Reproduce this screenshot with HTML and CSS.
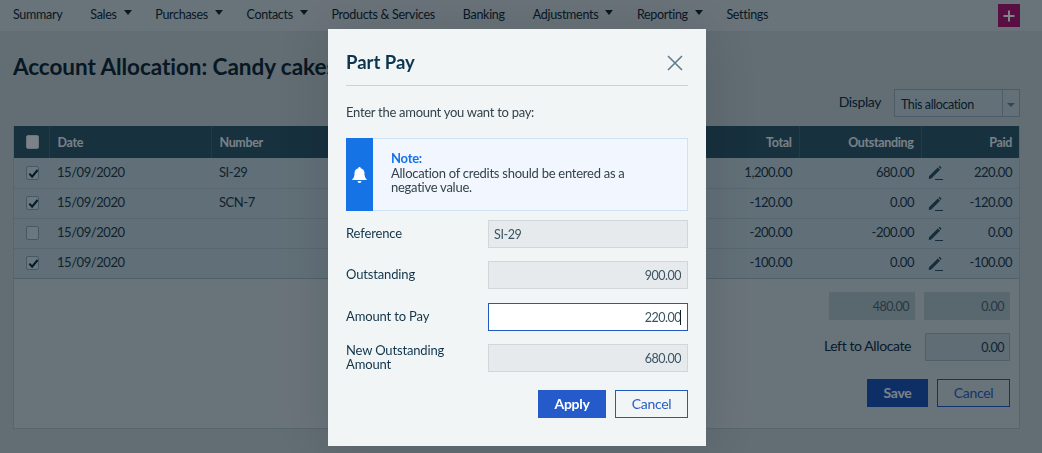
FILE: index.html
```html
<!DOCTYPE html>
<html lang="en">
<head>
    <meta charset="UTF-8">
    <meta name="viewport" content="width=device-width, initial-scale=1.0">
    <title>Account Allocation</title>
    <link rel="stylesheet" href="styles.css">
</head>
<body>
    <nav class="nav">
        <a class="nav-item">Summary</a>
        <a class="nav-item has-menu">Sales</a>
        <a class="nav-item has-menu">Purchases</a>
        <a class="nav-item has-menu">Contacts</a>
        <a class="nav-item">Products &amp; Services</a>
        <a class="nav-item">Banking</a>
        <a class="nav-item has-menu">Adjustments</a>
        <a class="nav-item has-menu">Reporting</a>
        <a class="nav-item">Settings</a>
        <span class="nav-add">
            <svg width="12" height="12" viewBox="0 0 12 12"><path d="M6 0.5v11M0.5 6h11" stroke="#fff" stroke-width="2"/></svg>
        </span>
    </nav>

    <main class="page">
        <h1 class="page-title">Account Allocation: Candy cakes</h1>
        <div class="display-row">
            <span class="display-label">Display</span>
            <div class="select">
                <span class="select-value">This allocation</span>
                <span class="select-arrow"></span>
            </div>
        </div>

        <div class="panel">
            <table class="grid">
                <colgroup>
                    <col class="col-check">
                    <col class="col-date">
                    <col class="col-number">
                    <col>
                    <col class="col-total">
                    <col class="col-outstanding">
                    <col class="col-paid">
                </colgroup>
                <thead>
                    <tr>
                        <th class="cell-check"><span class="check check-head"></span></th>
                        <th>Date</th>
                        <th>Number</th>
                        <th></th>
                        <th class="num">Total</th>
                        <th class="num">Outstanding</th>
                        <th class="num">Paid</th>
                    </tr>
                </thead>
                <tbody>
                    <tr>
                        <td class="cell-check"><span class="check"><svg viewBox="0 0 12 12"><path d="M1.5 6.2l3 3.2 6-7.2" fill="none" stroke="#00283c" stroke-width="2.2"/></svg></span></td>
                        <td>15/09/2020</td>
                        <td>SI-29</td>
                        <td></td>
                        <td class="num">1,200.00</td>
                        <td class="num">680.00</td>
                        <td class="num paid"><svg class="pencil" viewBox="0 0 15 15"><path d="M1 11.300L9.800 2.500l2.300 2.300L3.300 13.600 .8 14zM10.600 1.700l1-.9 2 2-.9 1.100z" fill="#2a4c60"/><path d="M7 14.500h8" stroke="#2a4c60"/></svg>220.00</td>
                    </tr>
                    <tr>
                        <td class="cell-check"><span class="check"><svg viewBox="0 0 12 12"><path d="M1.5 6.2l3 3.2 6-7.2" fill="none" stroke="#00283c" stroke-width="2.2"/></svg></span></td>
                        <td>15/09/2020</td>
                        <td>SCN-7</td>
                        <td></td>
                        <td class="num">-120.00</td>
                        <td class="num">0.00</td>
                        <td class="num paid"><svg class="pencil" viewBox="0 0 15 15"><path d="M1 11.300L9.800 2.500l2.300 2.300L3.300 13.600 .8 14zM10.600 1.700l1-.9 2 2-.9 1.100z" fill="#2a4c60"/><path d="M7 14.500h8" stroke="#2a4c60"/></svg>-120.00</td>
                    </tr>
                    <tr>
                        <td class="cell-check"><span class="check"></span></td>
                        <td>15/09/2020</td>
                        <td></td>
                        <td></td>
                        <td class="num">-200.00</td>
                        <td class="num">-200.00</td>
                        <td class="num paid"><svg class="pencil" viewBox="0 0 15 15"><path d="M1 11.300L9.800 2.500l2.300 2.300L3.300 13.600 .8 14zM10.600 1.700l1-.9 2 2-.9 1.100z" fill="#2a4c60"/><path d="M7 14.500h8" stroke="#2a4c60"/></svg>0.00</td>
                    </tr>
                    <tr>
                        <td class="cell-check"><span class="check"><svg viewBox="0 0 12 12"><path d="M1.5 6.2l3 3.2 6-7.2" fill="none" stroke="#00283c" stroke-width="2.2"/></svg></span></td>
                        <td>15/09/2020</td>
                        <td></td>
                        <td></td>
                        <td class="num">-100.00</td>
                        <td class="num">0.00</td>
                        <td class="num paid"><svg class="pencil" viewBox="0 0 15 15"><path d="M1 11.300L9.800 2.500l2.300 2.300L3.300 13.600 .8 14zM10.600 1.700l1-.9 2 2-.9 1.100z" fill="#2a4c60"/><path d="M7 14.500h8" stroke="#2a4c60"/></svg>-100.00</td>
                    </tr>
                </tbody>
            </table>

            <div class="summary">
                <div class="summary-row">
                    <span class="total-box">480.00</span>
                    <span class="total-box">0.00</span>
                </div>
                <div class="summary-row">
                    <span class="summary-label">Left to Allocate</span>
                    <span class="total-box total-box-line">0.00</span>
                </div>
                <div class="actions">
                    <button class="btn btn-primary">Save</button>
                    <button class="btn btn-secondary">Cancel</button>
                </div>
            </div>
        </div>
    </main>

    <!-- dim layer behind the dialog -->
    <div class="mask"></div>

    <section class="dialog">
        <header class="dialog-head">
            <h2 class="dialog-title">Part Pay</h2>
            <svg class="dialog-close" width="16" height="16" viewBox="0 0 16 16"><path d="M1 1l14 14M15 1L1 15" stroke="#5f7d8b" stroke-width="1.6" fill="none"/></svg>
        </header>
        <p class="dialog-intro">Enter the amount you want to pay:</p>

        <div class="note">
            <div class="note-icon">
                <svg width="15" height="16" viewBox="0 0 15 16"><path d="M7.5 0a1.2 1.2 0 0 1 1.2 1.3C11.2 1.800 12.500 3.800 12.500 6.500c0 3 .7 4.300 2.200 5.700.3.300.1.800-.3.800H.6c-.4 0-.6-.5-.3-.8C1.800 10.800 2.500 9.500 2.500 6.500c0-2.700 1.300-4.700 3.800-5.200A1.200 1.200 0 0 1 7.500 0zM5.500 14h4a2 2 0 0 1-4 0z" fill="#fff"/></svg>
            </div>
            <div class="note-text">
                <div class="note-title">Note:</div>
                Allocation of credits should be entered as a negative value.
            </div>
        </div>

        <div class="form">
            <label class="form-label">Reference</label>
            <input class="form-input form-input-left" value="SI-29" readonly>
            <label class="form-label">Outstanding</label>
            <input class="form-input" value="900.00" readonly>
            <label class="form-label">Amount to Pay</label>
            <div class="input-wrap">
                <input class="form-input form-input-active" value="220.00" readonly>
                <span class="caret"></span>
            </div>
            <label class="form-label">New Outstanding Amount</label>
            <input class="form-input" value="680.00" readonly>
        </div>

        <div class="actions dialog-actions">
            <button class="btn btn-primary btn-apply">Apply</button>
            <button class="btn btn-secondary">Cancel</button>
        </div>
    </section>
</body>
</html>
```

FILE: styles.css
```css
* {
    margin: 0;
    padding: 0;
    box-sizing: border-box;
}

html, body {
    height: 100%;
    overflow: hidden;
}

body {
    font-family: "Lato", "Liberation Sans", sans-serif;
    font-size: 14px;
    color: #1f3546;
    background: #c4ced0;
}

/* top menu */
.nav {
    display: flex;
    align-items: center;
    height: 31px;
    padding: 0 22px 3px 13px;
    background: #d2dadc;
}

.nav-item {
    font-size: 12.5px;
    letter-spacing: -.3px;
    color: #0f2430;
    margin-right: 28px;
}

.nav-item.has-menu {
    margin-right: 23.6px;
}

.nav-item.has-menu::after {
    content: "";
    display: inline-block;
    margin-left: 7px;
    vertical-align: 4px;
    border-left: 4px solid transparent;
    border-right: 4px solid transparent;
    border-top: 5px solid #0f2430;
}

.nav-add {
    display: flex;
    align-items: center;
    justify-content: center;
    width: 22px;
    height: 23px;
    margin-left: auto;
    margin-top: 3px;
    background: #b4106e;
}

/* page content */
.page {
    padding: 0 22px 0 13px;
}

.page-title {
    height: 58px;
    padding-top: 22px;
    font-size: 22.5px;
    font-weight: 700;
    line-height: 28px;
    letter-spacing: -.05px;
    color: #10222e;
}

.display-row {
    display: flex;
    align-items: center;
    justify-content: flex-end;
    height: 28px;
    margin-bottom: 9px;
}

.display-label {
    margin: -4px 13px 0 0;
    letter-spacing: -.4px;
    color: #0d2a3e;
}

.select {
    display: flex;
    width: 126px;
    height: 28px;
    border: 1px solid #97adb8;
    background: #c9d3d7;
}

.select-value {
    flex: 1;
    padding-left: 6px;
    font-size: 12.5px;
    line-height: 29px;
    letter-spacing: -.4px;
    color: #0d2a3e;
}

.select-arrow {
    position: relative;
    width: 17px;
    border-left: 1px solid #97adb8;
}

.select-arrow::after {
    content: "";
    position: absolute;
    left: 4px;
    top: 13px;
    border-left: 4px solid transparent;
    border-right: 4px solid transparent;
    border-top: 4px solid #6d818c;
}

.panel {
    border: 1px solid #aebcc3;
    border-top: 0;
    background: #d2dadd;
}

.grid {
    width: 100%;
    table-layout: fixed;
    border-collapse: collapse;
}

.col-check { width: 35px; }
.col-date { width: 162px; }
.col-number { width: 190px; }
.col-total { width: 118px; }
.col-outstanding { width: 122px; }
.col-paid { width: 98px; }

.grid th {
    height: 32px;
    padding: 0 7px 0 8px;
    background: #2e5466;
    border-left: 1px solid #46697b;
    font-size: 12.5px;
    font-weight: 700;
    letter-spacing: -.35px;
    text-align: left;
    color: #f0f4f6;
}

.grid th:first-child,
.grid th:nth-child(4),
.grid th:nth-child(5) {
    border-left: 0;
}

.grid td {
    height: 30px;
    padding: 0 7px 2px 8px;
    background: #c3d2d9;
    border-bottom: 1px solid #b0c1c9;
    font-size: 13px;
    letter-spacing: -.45px;
    color: #223544;
}

.grid tbody tr:last-child td {
    border-bottom-color: #a0b2bb;
}

.grid .num {
    text-align: right;
}

.grid .cell-check {
    padding: 0 0 0 12px;
}

.check {
    display: block;
    width: 13px;
    height: 14px;
    padding: 1px 0 0 1px;
    border: 1px solid #8ea3ae;
    border-radius: 2px;
    background: #d7e1e5;
}

.check svg {
    display: block;
    width: 11px;
    height: 11px;
}

.check-head {
    background: #f6f8f9;
    border-color: #d5dde1;
}

.paid {
    position: relative;
}

.pencil {
    position: absolute;
    left: 7px;
    top: 7px;
    width: 15px;
    height: 15px;
}

.summary {
    display: flex;
    flex-direction: column;
    align-items: flex-end;
    padding: 13px 9px 21px 0;
}

.summary-row {
    display: flex;
    align-items: center;
    gap: 9px;
    margin-bottom: 13px;
}

.summary-label {
    margin: -2px 5px 0 0;
    font-size: 14px;
    letter-spacing: -.4px;
    color: #0d2a3e;
}

.total-box {
    width: 86px;
    height: 28px;
    padding-right: 6px;
    background: #b2c0c4;
    font-size: 12.5px;
    line-height: 29px;
    letter-spacing: -.5px;
    text-align: right;
    color: #50626c;
}

.total-box-line {
    width: 85px;
    border: 1px solid #a1b2b8;
    background: #c0cdd1;
    color: #1c3a4e;
    line-height: 28px;
    padding-right: 5px;
}

.actions {
    display: flex;
    justify-content: flex-end;
    gap: 9px;
    margin-top: 5px;
}

.btn {
    height: 28px;
    font-family: inherit;
    font-size: 14px;
    letter-spacing: -.3px;
    cursor: pointer;
}

.btn-primary {
    width: 61px;
    border: 0;
    background: #1c4fb4;
    font-weight: 700;
    color: #f4f6fb;
}

.btn-secondary {
    width: 73px;
    border: 1px solid #2058c6;
    background: transparent;
    color: #2a5cc4;
}

/* dim layer and dialog */
.mask {
    position: fixed;
    top: 0;
    left: 0;
    width: 100%;
    height: 100%;
    background: rgba(0, 14, 24, .5);
}

.dialog {
    position: fixed;
    top: 29px;
    left: 328px;
    width: 378px;
    height: 417px;
    padding: 0 18px;
    background: #f1f5f6;
    box-shadow: 0 0 50px rgba(0, 0, 0, .12);
}

.dialog-head {
    display: flex;
    align-items: center;
    justify-content: space-between;
    height: 57px;
    padding: 9px 5px 0 0;
    border-bottom: 1px solid #ccd3d7;
}

.dialog-title {
    font-size: 18.5px;
    font-weight: 700;
    color: #0c3550;
}

.dialog-close {
    margin-top: 3px;
}

.dialog-intro {
    margin-top: 18px;
    font-size: 13px;
    line-height: 16px;
    letter-spacing: -.28px;
    color: #33424c;
}

.note {
    display: flex;
    height: 73px;
    margin-top: 18px;
    border: 1px solid #cde2f7;
    background: #f2f7ff;
}

.note-icon {
    display: flex;
    flex: none;
    align-items: center;
    justify-content: center;
    width: 27px;
    margin: -1px 0 -1px -1px;
    background: #1573e6;
}

.note-text {
    padding: 12px 40px 0 18px;
    font-size: 13px;
    line-height: 14px;
    letter-spacing: -.26px;
    color: #33424c;
}

.note-title {
    font-weight: 700;
    line-height: 15px;
    color: #1573e6;
}

.form {
    display: grid;
    grid-template-columns: 142px 200px;
    grid-auto-rows: 28px;
    row-gap: 13.33px;
    align-items: center;
    margin-top: 9px;
}

.form-label {
    padding-right: 20px;
    margin-top: -2px;
    font-size: 13px;
    line-height: 14px;
    letter-spacing: -.15px;
    color: #11354c;
}

.form-input {
    display: block;
    width: 200px;
    height: 28px;
    padding: 1px 6px 0;
    border: 1px solid #d0d7da;
    outline: 0;
    background: #e6eaec;
    font-family: inherit;
    font-size: 12.5px;
    letter-spacing: -.5px;
    text-align: right;
    color: #3a5463;
}

.form-input-left {
    padding-left: 5px;
    letter-spacing: -.4px;
    text-align: left;
}

.form-input-active {
    border-color: #2058c6;
    background: #fff;
}

.input-wrap {
    position: relative;
}

.caret {
    position: absolute;
    right: 7px;
    top: 7px;
    width: 1px;
    height: 15px;
    background: #10222e;
}

.dialog-actions {
    margin-top: 18px;
}

.btn-apply {
    width: 68px;
    background: #245ac9;
    color: #fff;
}
```
